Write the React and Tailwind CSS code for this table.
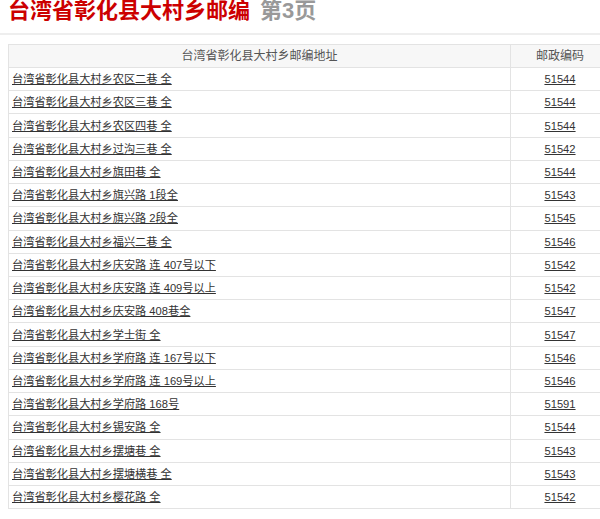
const ROWS = [
  ['台湾省彰化县大村乡农区二巷 全', '51544'],
  ['台湾省彰化县大村乡农区三巷 全', '51544'],
  ['台湾省彰化县大村乡农区四巷 全', '51544'],
  ['台湾省彰化县大村乡过沟三巷 全', '51542'],
  ['台湾省彰化县大村乡旗田巷 全', '51544'],
  ['台湾省彰化县大村乡旗兴路 1段全', '51543'],
  ['台湾省彰化县大村乡旗兴路 2段全', '51545'],
  ['台湾省彰化县大村乡福兴二巷 全', '51546'],
  ['台湾省彰化县大村乡庆安路 连 407号以下', '51542'],
  ['台湾省彰化县大村乡庆安路 连 409号以上', '51542'],
  ['台湾省彰化县大村乡庆安路 408巷全', '51547'],
  ['台湾省彰化县大村乡学士街 全', '51547'],
  ['台湾省彰化县大村乡学府路 连 167号以下', '51546'],
  ['台湾省彰化县大村乡学府路 连 169号以上', '51546'],
  ['台湾省彰化县大村乡学府路 168号', '51591'],
  ['台湾省彰化县大村乡锡安路 全', '51544'],
  ['台湾省彰化县大村乡摆塘巷 全', '51543'],
  ['台湾省彰化县大村乡摆塘横巷 全', '51543'],
  ['台湾省彰化县大村乡樱花路 全', '51542'],
]

export default function App() {
  return (
    <div className="w-[600px] h-[519px] overflow-hidden bg-white font-['Liberation_Sans','Noto_Sans_CJK_SC',sans-serif]">
      <div className="flex h-[35px] items-start border-b-2 border-[#eeeeee]">
        <h1 className="-mt-[1px] pl-[8px] text-[22px] leading-[24px] font-bold text-[#cc0000] whitespace-nowrap">
          台湾省彰化县大村乡邮编<span className="ml-[10px] text-[#999999]">第3页</span>
        </h1>
      </div>
      <div className="mt-[9px] ml-[8px] w-[602px] border-t border-l border-r border-[#e3e3e3] text-[11.2px] text-[#333333]">
        <div className="flex h-[23px] border-b border-[#e3e3e3] bg-[#f7f7f7] text-[12px] text-[#555555]">
          <div className="flex flex-1 items-center justify-center border-r border-[#e3e3e3]">台湾省彰化县大村乡邮编地址</div>
          <div className="flex w-[98px] items-center justify-center">邮政编码</div>
        </div>
        {ROWS.map(([addr, code]) => (
          <div key={addr} className="flex h-[23.22px] border-b border-[#e3e3e3]">
            <div className="flex flex-1 items-center border-r border-[#e3e3e3] px-[3px]">
              <a href="#" className="underline text-[#333333] leading-[14px]">{addr}</a>
            </div>
            <div className="flex w-[98px] items-center justify-center">
              <a href="#" className="underline text-[#333333] leading-[14px]">{code}</a>
            </div>
          </div>
        ))}
      </div>
    </div>
  )
}
